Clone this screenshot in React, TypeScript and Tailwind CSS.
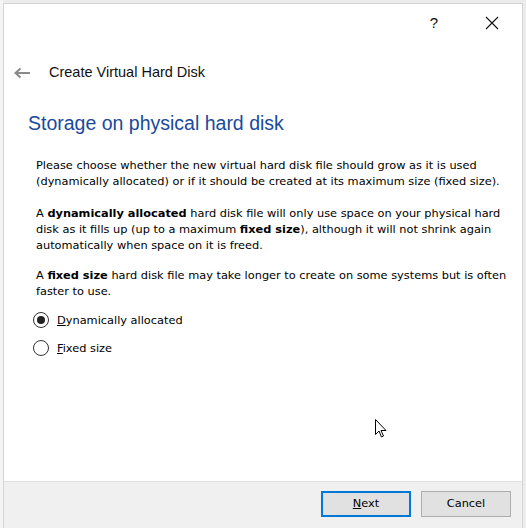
import React from "react";

export default function App() {
  const ui = { fontFamily: '"Liberation Sans", Arial, sans-serif' } as React.CSSProperties;
  const tahoma = { fontFamily: '"DejaVu Sans", Verdana, sans-serif' } as React.CSSProperties;
  return (
    <div className="relative w-[526px] h-[528px] overflow-hidden bg-[#ececec]" style={ui}>
      {/* background window strip */}
      <div className="absolute left-0 top-0 w-[3px] h-full bg-[#f4f4f4]" />
      {/* dialog */}
      <div className="absolute left-[3px] top-[3px] w-[520px] h-[525px] bg-white border-l border-t border-r border-[#d4d4d4] flex flex-col">
        {/* title bar */}
        <div className="h-[42px] flex items-center justify-end text-[#111] pb-[4px]">
          <span className="text-[15px] mr-[47px]">?</span>
          <svg width="14" height="14" viewBox="0 0 14 14" className="mr-[23px]">
            <path d="M1 1 L13 13 M13 1 L1 13" stroke="#111" strokeWidth="1.1" />
          </svg>
        </div>
        {/* header */}
        <div className="h-[56px] flex items-center pl-[9px] pb-[2px]">
          <svg width="18" height="12" viewBox="0 0 18 12">
            <path d="M17 6 H3 M7.5 1.5 L2.5 6 L7.5 10.5" stroke="#8a8a8a" strokeWidth="2" fill="none" />
          </svg>
          <span className="ml-[18px] text-[14.5px] text-[#111]">Create Virtual Hard Disk</span>
        </div>
        {/* content */}
        <div className="flex-1 flex flex-col pl-[24px] pr-[8px]">
          <div className="text-[19.5px] text-[#1a4a9c] mt-[9px] leading-[24px]">Storage on physical hard disk</div>
          <div className="pl-[8px] mt-[22px] text-[11.35px] leading-[16px] text-[#000]" style={tahoma}>
            <p>Please choose whether the new virtual hard disk file should grow as it is used (dynamically allocated) or if it should be created at its maximum size (fixed size).</p>
            <p className="mt-[16px]">A <b>dynamically allocated</b> hard disk file will only use space on your physical hard disk as it fills up (up to a maximum <b>fixed size</b>), although it will not shrink again automatically when space on it is freed.</p>
            <p className="mt-[14px]">A <b>fixed size</b> hard disk file may take longer to create on some systems but is often faster to use.</p>
          </div>
          <div className="mt-[13px] pl-[5px] flex flex-col gap-[12px] text-[11.35px] text-[#000]" style={tahoma}>
            <div className="flex items-center h-[16px]">
              <span className="w-[16px] h-[16px] rounded-full border border-[#333] flex items-center justify-center">
                <span className="w-[8px] h-[8px] rounded-full bg-[#222]" />
              </span>
              <span className="ml-[8px]"><u>D</u>ynamically allocated</span>
            </div>
            <div className="flex items-center h-[16px]">
              <span className="w-[16px] h-[16px] rounded-full border border-[#333]" />
              <span className="ml-[8px]"><u>F</u>ixed size</span>
            </div>
          </div>
        </div>
        {/* footer */}
        <div className="h-[47px] bg-[#f0f0f0] border-t border-[#dfdfdf] flex items-center justify-end pr-[11px] gap-[10px] pb-[2px]" style={tahoma}>
          <button className="w-[90px] h-[26px] bg-[#e1e1e1] border-2 border-[#0078d7] text-[11.35px] text-[#000]"><u>N</u>ext</button>
          <button className="w-[90px] h-[26px] bg-[#e1e1e1] border border-[#adadad] text-[11.35px] text-[#000]">Cancel</button>
        </div>
      </div>
      {/* mouse cursor */}
      <svg className="absolute left-[375px] top-[419px]" width="13" height="20" viewBox="0 0 13 20">
        <path d="M0.5 0.5 L0.5 15.5 L4 12 L6.5 18 L8.5 17 L6 11.5 L11 11.5 Z" fill="#fff" stroke="#000" strokeWidth="1" />
      </svg>
    </div>
  );
}
